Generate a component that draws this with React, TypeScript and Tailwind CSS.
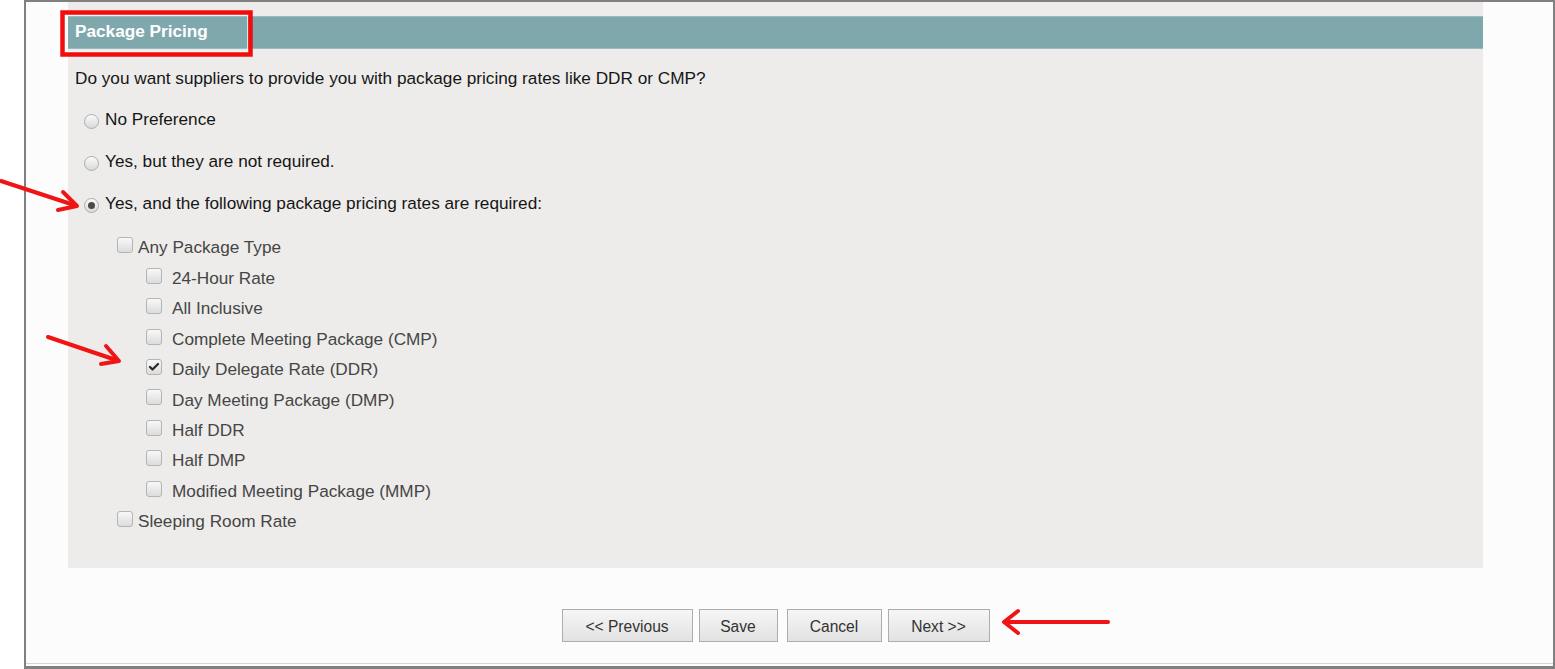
import { Check } from "lucide-react";

type Level = 1 | 2;

const packageTypes = [
  { label: "24-Hour Rate" },
  { label: "All Inclusive" },
  { label: "Complete Meeting Package (CMP)" },
  { label: "Daily Delegate Rate (DDR)", checked: true },
  { label: "Day Meeting Package (DMP)" },
  { label: "Half DDR" },
  { label: "Half DMP" },
  { label: "Modified Meeting Package (MMP)" },
];

const radios = [
  { label: "No Preference" },
  { label: "Yes, but they are not required." },
  { label: "Yes, and the following package pricing rates are required:", selected: true },
];

function Radio({ label, selected }: { label: string; selected?: boolean }) {
  return (
    <div className="flex h-[42px] items-center pl-[16px]">
      <span className="mt-[2px] flex h-[15px] w-[15px] items-center justify-center rounded-full border border-[#adadad] bg-gradient-to-b from-[#fbfbfb] to-[#d9d9d9]">
        {selected && <span className="h-[7px] w-[7px] rounded-full bg-[#4a4a4a]" />}
      </span>
      <span className="ml-[6px] text-[#161616]">{label}</span>
    </div>
  );
}

function CheckRow({ label, checked, level }: { label: string; checked?: boolean; level: Level }) {
  return (
    <div className={`flex h-[30.45px] items-center ${level === 1 ? "pl-[49px]" : "pl-[78px]"}`}>
      <span className="mb-[6px] flex h-[16px] w-[16px] items-center justify-center rounded-[3px] border border-[#b4b4b4] bg-gradient-to-b from-[#f8f8f8] to-[#dcdcdc]">
        {checked && <Check className="h-[12px] w-[12px] text-[#2a2a2a]" strokeWidth={4.5} />}
      </span>
      <span className={`${level === 1 ? "ml-[5px]" : "ml-[10px]"} text-[#454545]`}>{label}</span>
    </div>
  );
}

function Button({ label, width }: { label: string; width: string }) {
  return (
    <button
      className={`${width} h-[33px] border border-[#adadad] bg-gradient-to-b from-[#f6f6f6] to-[#e2e2e2] pt-[2px] text-[15.6px] text-[#333]`}
    >
      {label}
    </button>
  );
}

function Annotations() {
  return (
    <svg className="pointer-events-none absolute inset-0" width="1555" height="669" viewBox="0 0 1555 669">
      <rect x="62.5" y="12.5" width="188" height="42" fill="none" stroke="#f20c0c" strokeWidth="4.5" />
      <rect x="65.5" y="15.5" width="182" height="36" fill="none" stroke="#ffffff" strokeWidth="1" opacity="0.7" />
      <g stroke="#f01414" strokeWidth="4" strokeLinecap="round" strokeLinejoin="round" fill="none">
        <line x1="1" y1="181" x2="74" y2="205" />
        <polyline points="63,192 77,206 58,210" />
        <line x1="48" y1="337" x2="116" y2="360" />
        <polyline points="106,346 119,361 101,364" />
        <line x1="1108" y1="622" x2="1006" y2="622" />
        <polyline points="1018,611 1004,622 1018,633" />
      </g>
    </svg>
  );
}

export default function App() {
  return (
    <div className="relative h-[669px] w-[1555px] bg-white font-['Liberation_Sans',Arial,sans-serif] text-[17.2px]">
      <div className="ml-[24px] flex h-[669px] flex-col border-t-2 border-r-2 border-b-[3px] border-l-2 border-[#808080] bg-[#fcfcfc]">
        <div className="ml-[42px] w-[1415px] bg-[#edecea] pt-[14px] pb-[31px]">
          <div className="flex h-[33px] items-center border-y border-[#9cbbbe] bg-[#7fa8ad] pl-[7px] pb-[2px] font-bold text-white">
            Package Pricing
          </div>
          <p className="mt-[19px] pl-[7px] leading-[20px] text-[#161616]">
            Do you want suppliers to provide you with package pricing rates like DDR or CMP?
          </p>
          <div className="mt-[11px]">
            {radios.map((r) => (
              <Radio key={r.label} label={r.label} selected={r.selected} />
            ))}
          </div>
          <div className="mt-[8px]">
            <CheckRow label="Any Package Type" level={1} />
            {packageTypes.map((p) => (
              <CheckRow key={p.label} label={p.label} checked={p.checked} level={2} />
            ))}
            <CheckRow label="Sleeping Room Rate" level={1} />
          </div>
        </div>
        <div className="mt-[41px] ml-[42px] flex w-[1415px] justify-center">
          <Button label="<< Previous" width="w-[131px]" />
          <div className="ml-[6px]">
            <Button label="Save" width="w-[79px]" />
          </div>
          <div className="ml-[9px]">
            <Button label="Cancel" width="w-[95px]" />
          </div>
          <div className="ml-[6px]">
            <Button label="Next >>" width="w-[102px]" />
          </div>
        </div>
        <div className="mt-auto h-[3px] border-t border-[#d6d6d6]" />
      </div>
      <Annotations />
    </div>
  );
}
